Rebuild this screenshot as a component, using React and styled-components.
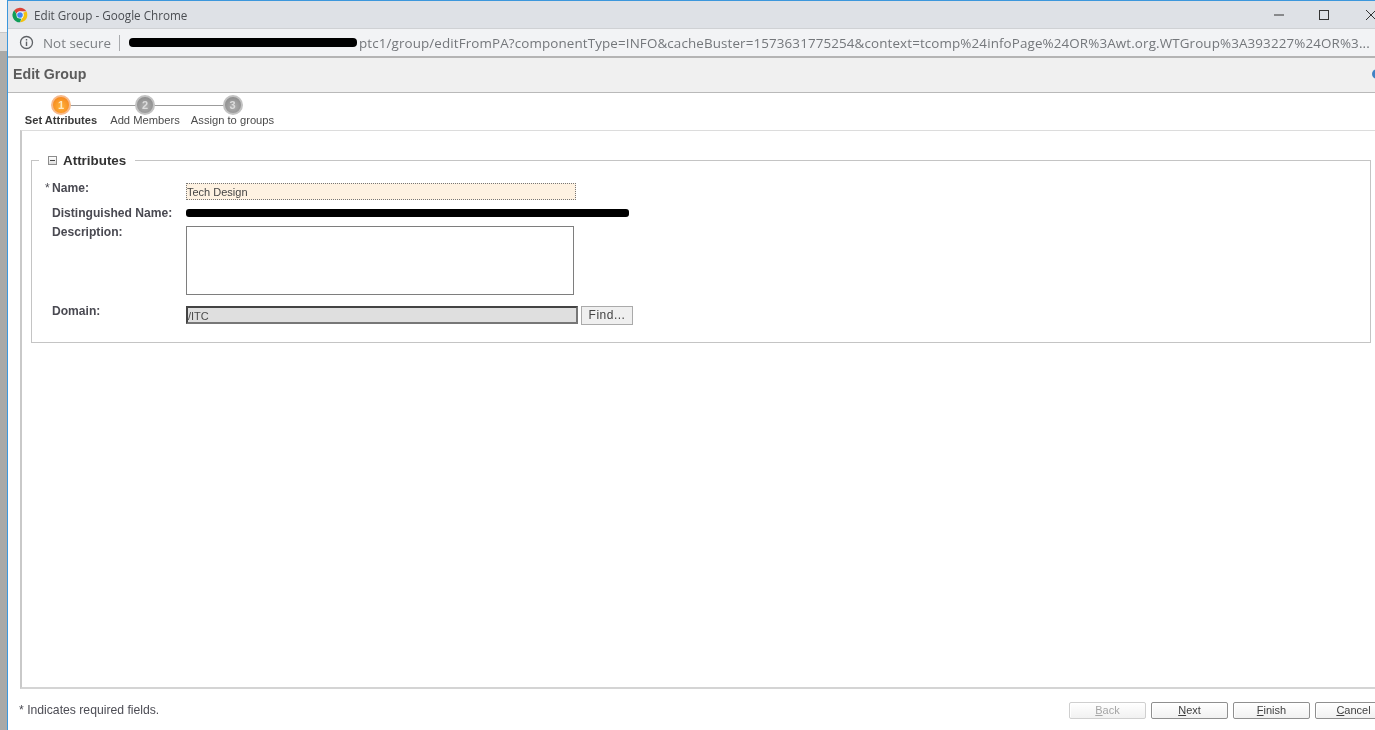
import React from 'react';
import styled, { createGlobalStyle } from 'styled-components';

const Global = createGlobalStyle`
  html, body { margin: 0; padding: 0; height: 100%; overflow: hidden; background: #fff; }
  body { font-family: "Liberation Sans", Arial, sans-serif; }
`;
const Page = styled.div`display: flex; width: 1375px; height: 730px; overflow: hidden; filter: blur(0.35px);`;
const DesktopEdge = styled.div`
  width: 7px; flex: none; display: flex; flex-direction: column;
  background: #a9a9a7;
`;
const EdgeTop = styled.div`height: 32px; background: #f6f6f6; border-bottom: 1px solid #c8c8c8;`;
const EdgeMid = styled.div`height: 18px; background: #dcdcdc;`;
const Win = styled.div`
  flex: 1; min-width: 0; display: flex; flex-direction: column;
  border-left: 1px solid #3c97dc; border-top: 1px solid #3c97dc; background: #fff;
`;
const TitleBar = styled.div`
  height: 27px; flex: none; display: flex; align-items: center; background: #dee1e6; padding-left: 4px;
`;
const TitleText = styled.span`
  font-family: "Open Sans", sans-serif; font-size: 11.7px; color: #4a4d52; margin-left: 6px; flex: 1; white-space: nowrap;
`;
const WinControls = styled.div`display: flex; align-items: center; width: 102px; height: 100%; flex: none;`;
const WinBtn = styled.svg`display: block; width: 12px; height: 12px; flex: none; margin-left: ${p => p.$gap}px;`;
const AddressBar = styled.div`
  flex: none; display: flex; align-items: center; background: #f2f3f5;
  border-top: 1px solid #cfd1d4; box-sizing: border-box; border-bottom: 2px solid #b4b4b4; padding-left: 11px; height: 30px;
  font-family: "Open Sans", sans-serif; font-size: 13.4px; white-space: nowrap; overflow: hidden;
`;
const NotSecure = styled.span`color: #7b7e82; margin-left: 9px;`;
const Divider = styled.span`width: 1px; height: 16px; background: #a9abae; margin: 0 9px 0 8px; flex: none;`;
const Url = styled.span`color: #74777b; display: flex; align-items: center; letter-spacing: 0.125px;`;
const UrlScribble = styled.span`
  display: block; width: 228px; height: 9px; background: #000; border-radius: 4px; margin-right: 2px; flex: none;
`;
const HeaderBand = styled.div`
  height: 32px; flex: none; background: #f0f0f0; border-bottom: 1px solid #b9b9b9; box-sizing: content-box;
  display: flex; align-items: center; justify-content: space-between; padding: 0 0 2px 5px;
  font-size: 14.2px; font-weight: 700; color: #5c5c5c;
`;
const HelpDot = styled.span`
  width: 10px; height: 10px; border-radius: 50%; background: #3f82c4; margin-right: -7px; flex: none;
`;
const Body = styled.div`flex: 1; min-height: 0; display: flex; flex-direction: column; padding-left: 12px;`;
const Steps = styled.div`height: 37px; flex: none; display: flex; position: relative; padding-left: 4px; box-sizing: border-box;`;
const Step = styled.div`
  width: ${p => p.$w}px; flex: none; display: flex; flex-direction: column; align-items: center; position: relative;
  font-size: ${p => p.$active ? 11.1 : 11.2}px; font-weight: ${p => p.$active ? 700 : 400}; color: ${p => p.$active ? '#3a3a3a' : '#4b4b4b'}; white-space: nowrap;
`;
const StepDot = styled.span`
  width: 20px; height: 20px; margin-top: 2px; border-radius: 50%; box-sizing: border-box; position: relative; z-index: 1;
  display: flex; align-items: center; justify-content: center; font-size: 11px; font-weight: 700; color: ${p => p.$active ? '#ffe9c0' : '#dcdcdc'};
  background: ${p => p.$active ? 'radial-gradient(circle at 50% 60%, #ffb43c, #f68a1e 75%)' : 'radial-gradient(circle at 50% 60%, #b0b0b0, #8f8f8f 75%)'};
  border: 2px solid ${p => p.$active ? '#f7b98a' : '#c2c2c2'};
`;
const StepLine = styled.span`
  position: absolute; top: 12px; left: 41px; width: 171px; height: 1px; background: #9c9c9c;
`;
const StepLabel = styled.span`margin-top: -1px;`;
const Panel = styled.div`
  flex: none; height: 559px; margin-right: -40px; box-sizing: border-box; padding: 29px 44px 0 9px;
  border-top: 1px solid #dcdcdc; border-left: 2px solid #c9c9c9; border-bottom: 2px solid #d4d4d4;
`;
const Fieldset = styled.div`
  border: 1px solid #c4c4c4; height: 183px; box-sizing: border-box; width: 1340px; position: relative; padding: 20px 0 0 12px;
`;
const Legend = styled.div`
  position: absolute; top: -9px; left: 7px; padding: 0 9px 0 9px; background: #fff; display: flex; align-items: center; gap: 6px;
  font-size: 13.4px; font-weight: 700; color: #333; line-height: 17px;
`;
const Toggle = styled.span`
  width: 7px; height: 7px; border: 1px solid #8c8c8c; background: linear-gradient(#fff, #ddd); display: flex; align-items: center; justify-content: center;
`;
const ToggleBar = styled.span`width: 5px; height: 1px; background: #444;`;
const Row = styled.div`
  display: grid; grid-template-columns: 142px auto; height: ${p => p.$h}px; align-items: start;
`;
const Label = styled.div`
  font-size: 12.1px; font-weight: 700; color: #4a4a52; padding-left: 8px; position: relative; margin-top: ${p => p.$t || 0}px; white-space: nowrap;
`;
const Req = styled.span`position: absolute; left: 1px; top: 0; font-weight: 400;`;
const NameInput = styled.div`
  width: 390px; height: 17px; box-sizing: border-box; border: 1px dotted #777; background: #fef2e2; margin-top: 2px;
  font-size: 11px; color: #444; line-height: 17px; padding-left: 0;
`;
const Scribble = styled.span`display: block; width: 443px; height: 8px; background: #000; border-radius: 3px; margin-top: 3px;`;
const TextArea = styled.div`
  width: 388px; height: 69px; box-sizing: border-box; border: 1px solid #7e7e7e; background: #fff; margin-top: 1px;
`;
const DomainWrap = styled.div`display: flex; align-items: flex-start; gap: 3px;`;
const DomainInput = styled.div`
  width: 392px; height: 18px; box-sizing: border-box; border: 2px solid #444; border-right-color: #777; border-bottom-color: #777; background: #dfdfdf;
  font-size: 11px; color: #4c4c4c; line-height: 16px; margin-top: 1px;
`;
const FindBtn = styled.div`
  width: 52px; height: 19px; box-sizing: border-box; border: 1px solid #aaa; background: #efefef; font-size: 12px; color: #444;
  text-align: center; line-height: 17px; letter-spacing: 0.5px; margin-top: 1px;
`;
const Footer = styled.div`
  flex: 1; display: flex; align-items: center; justify-content: space-between; margin-left: -1px; margin-right: -17px; padding-top: 1px;
`;
const Note = styled.div`font-size: 12.2px; color: #4d4d55;`;
const Buttons = styled.div`display: flex; gap: 5px; flex: none;`;
const WizBtn = styled.div`
  width: 77px; height: 17px; box-sizing: border-box; border: 1px solid ${p => p.$off ? '#cfcfcf' : '#8f8f8f'}; border-radius: 2px;
  background: linear-gradient(#fff, #f1f1f1); box-shadow: inset 1px 1px 0 #fff;
  font-size: 11px; line-height: 15px; text-align: center; color: ${p => p.$off ? '#a5a5a5' : '#3f3f3f'};
  & u { text-decoration: underline; }
`;

const ChromeLogo = () => (
  <svg width="16" height="16" viewBox="0 0 48 48" style={{ flex: 'none', display: 'block' }}>
    <path d="M24 2a22 22 0 0 1 19.05 11H24a11 11 0 0 0-10.4 7.4L6.6 9.9A22 22 0 0 1 24 2z" fill="#db4437" />
    <path d="M43.05 13A22 22 0 0 1 24 46l9.5-16.5A11 11 0 0 0 33.5 18L43.05 13z" fill="#f4c20d" />
    <path d="M24 46A22 22 0 0 1 6.6 9.9l9.9 16.6A11 11 0 0 0 28 34.3z" fill="#0f9d58" />
    <circle cx="24" cy="24" r="10.5" fill="#fff" />
    <circle cx="24" cy="24" r="8.5" fill="#4285f4" />
  </svg>
);
const InfoIcon = () => (
  <svg width="15" height="15" viewBox="0 0 15 15" style={{ flex: 'none', display: 'block' }}>
    <circle cx="7.5" cy="7.5" r="6" fill="none" stroke="#5f6266" strokeWidth="1.3" />
    <rect x="6.8" y="6.6" width="1.4" height="4.4" fill="#5f6266" />
    <rect x="6.8" y="4" width="1.4" height="1.5" fill="#5f6266" />
  </svg>
);

export default function App() {
  return (
    <Page>
      <Global />
      <DesktopEdge><EdgeTop /><EdgeMid /></DesktopEdge>
      <Win>
        <TitleBar>
          <ChromeLogo />
          <TitleText>Edit Group - Google Chrome</TitleText>
          <WinControls>
            <WinBtn $gap={0} viewBox="0 0 12 12"><path d="M1 6h10" stroke="#333" strokeWidth="1" /></WinBtn>
            <WinBtn $gap={33} viewBox="0 0 12 12"><rect x="1.5" y="1.5" width="9" height="9" fill="none" stroke="#333" strokeWidth="1" /></WinBtn>
            <WinBtn $gap={35} viewBox="0 0 12 12"><path d="M1 1l10 10M11 1L1 11" stroke="#333" strokeWidth="1" /></WinBtn>
          </WinControls>
        </TitleBar>
        <AddressBar>
          <InfoIcon />
          <NotSecure>Not secure</NotSecure>
          <Divider />
          <Url>
            <UrlScribble />
            ptc1/group/editFromPA?componentType=INFO&amp;cacheBuster=1573631775254&amp;context=tcomp%24infoPage%24OR%3Awt.org.WTGroup%3A393227%24OR%3...
          </Url>
        </AddressBar>
        <HeaderBand>
          Edit Group
          <HelpDot />
        </HeaderBand>
        <Body>
          <Steps>
            <StepLine />
            <Step $w={74} $active><StepDot $active>1</StepDot><StepLabel>Set Attributes</StepLabel></Step>
            <Step $w={94}><StepDot>2</StepDot><StepLabel>Add Members</StepLabel></Step>
            <Step $w={81}><StepDot>3</StepDot><StepLabel>Assign to groups</StepLabel></Step>
          </Steps>
          <Panel>
            <Fieldset>
              <Legend><Toggle><ToggleBar /></Toggle>Attributes</Legend>
              <Row $h={25}>
                <Label><Req>*</Req>Name:</Label>
                <NameInput>Tech Design</NameInput>
              </Row>
              <Row $h={19}>
                <Label>Distinguished Name:</Label>
                <Scribble />
              </Row>
              <Row $h={80}>
                <Label>Description:</Label>
                <TextArea />
              </Row>
              <Row $h={24}>
                <Label $t={-1}>Domain:</Label>
                <DomainWrap><DomainInput>/ITC</DomainInput><FindBtn>Find...</FindBtn></DomainWrap>
              </Row>
            </Fieldset>
          </Panel>
          <Footer>
            <Note>* Indicates required fields.</Note>
            <Buttons>
              <WizBtn $off><u>B</u>ack</WizBtn>
              <WizBtn><u>N</u>ext</WizBtn>
              <WizBtn><u>F</u>inish</WizBtn>
              <WizBtn><u>C</u>ancel</WizBtn>
            </Buttons>
          </Footer>
        </Body>
      </Win>
    </Page>
  );
}
